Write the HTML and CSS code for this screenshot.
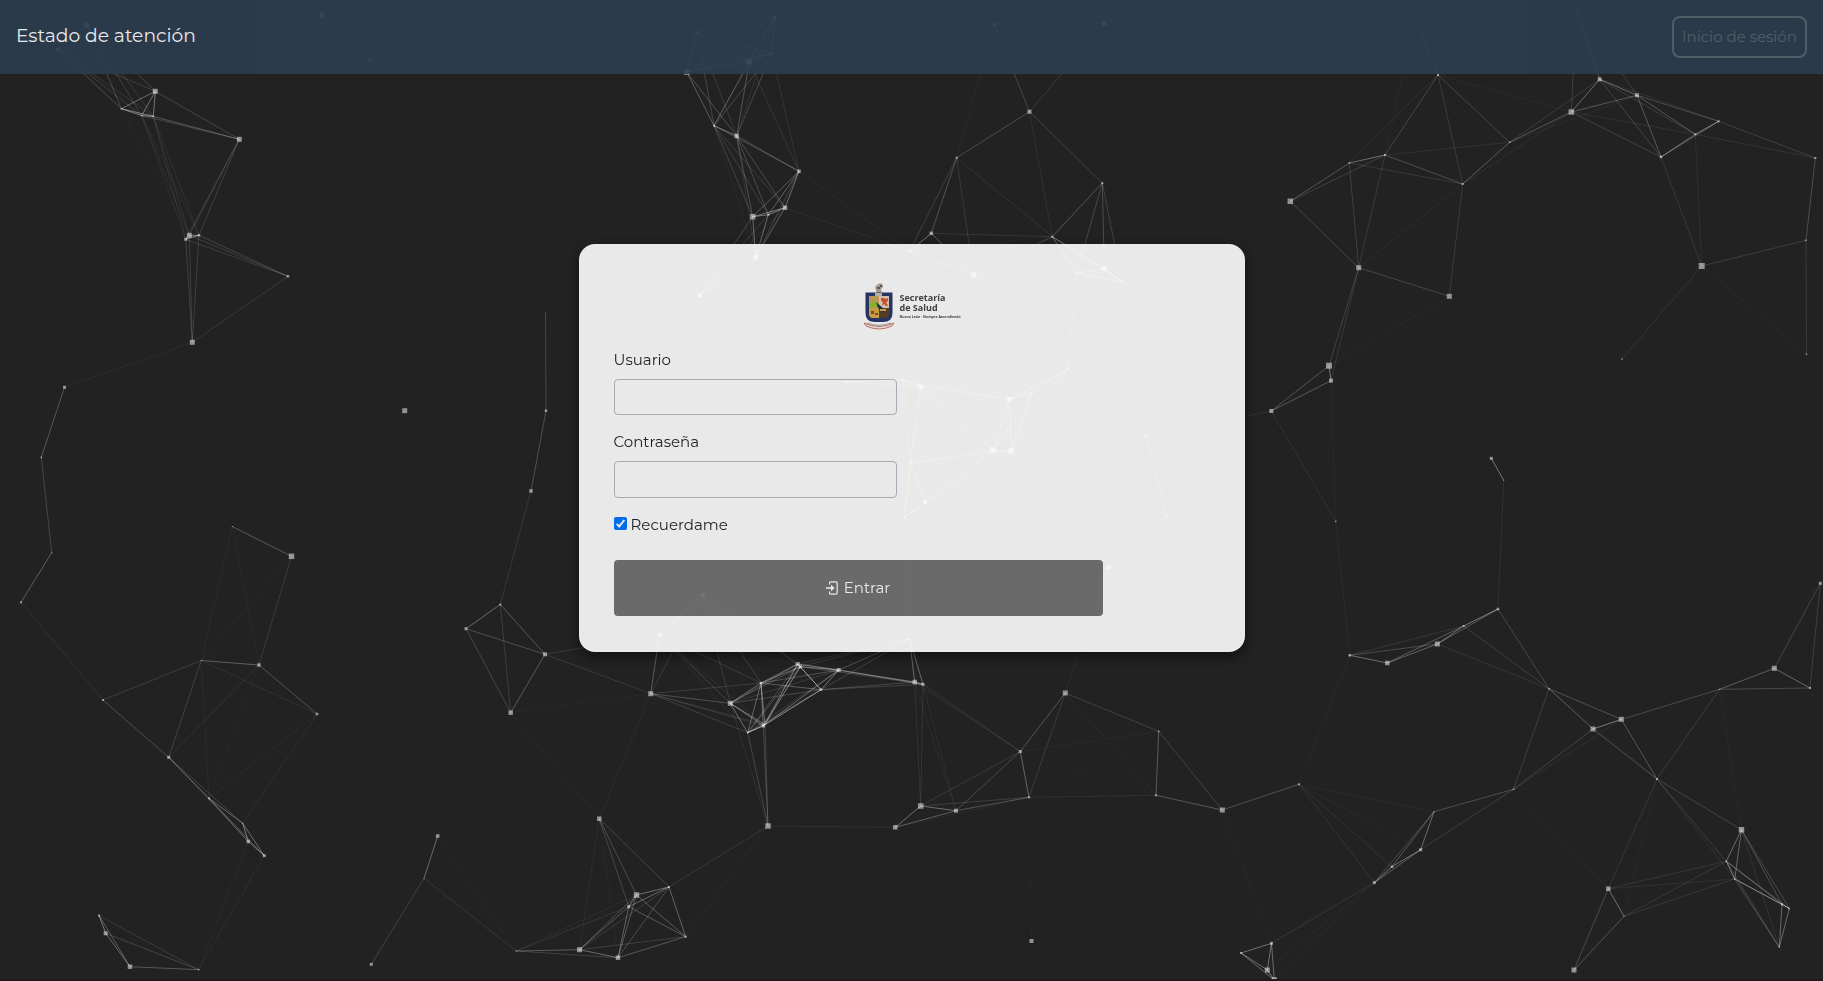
FILE: index.html
```html
<!DOCTYPE html>
<html lang="es">
<head>
<meta charset="utf-8">
<title>Estado de atención</title>
<link rel="stylesheet" href="styles.css">
</head>
<body>
<canvas class="particles" id="particles"></canvas>
<div class="page">
  <header class="navbar">
    <a class="brand"><span class="t-brand">Estado de atención</span></a>
    <button class="login-link" type="button"><span class="t-login">Inicio de sesión</span></button>
  </header>
  <main class="content">
    <form class="card">
      <div class="logo">
        <svg class="crest" width="32" height="48" viewBox="0 0 32 48">
          <path d="M14 13 L13 8 Q11 5 14 3 Q17 0 19.500 2.500 Q21 5 18 7 L19 13 Z" fill="#b5a79b"/>
          <path d="M14 5h3v2h-3z M17 3h2v2h-2z" fill="#6b5b50"/>
          <path d="M2.500 10.500 H29.500 V31 Q29.500 40 20 40 H12 Q2.500 40 2.500 31 Z" fill="#27376b"/>
          <path d="M6 14 H16 V26 H6 Z" fill="#c9a560"/>
          <path d="M16 14 H26 V26 H16 Z" fill="#e5d3bd"/>
          <path d="M6 26 H16 V36 H10 Q6 36 6 32 Z" fill="#d9a947"/>
          <path d="M16 26 H26 V32 Q26 36 21 36 H16 Z" fill="#594325"/>
          <path d="M6 25 Q7 18 13 20 L17 25 Z" fill="#8fc52e"/>
          <path d="M13 20 L21 27 V31 L15 26 Z" fill="#24343b"/>
          <path d="M18 16h3l2 1 2-1v3l-2 1 2 4h-2l-2-2-2 2 1-4-2-1z" fill="#e0532f"/>
          <path d="M17 27h6v2h-6z" fill="#d4a85a"/>
          <path d="M8 29h3v3H8z M12 31h3v2h-3z" fill="#7d5525"/>
          <path d="M12 11h7v3h-7z" fill="#c9beb4"/>
          <path d="M1 41 Q16 48 31 41 L29 44 Q16 50 3 44 Z" fill="#f1efed" stroke="#d3695f" stroke-width=".9"/>
          <path d="M4 41 Q16 45.500 28 41" fill="none" stroke="#7c9b84" stroke-width=".8"/>
        </svg>
        <div class="logo-text">
          <span class="t-l1">Secretaría</span>
          <span class="t-l2">de Salud</span>
          <span class="t-l3">Nuevo León · Siempre Ascendiendo</span>
        </div>
      </div>
      <label class="label" for="user"><span class="t-user">Usuario</span></label>
      <input class="field" id="user" type="text">
      <label class="label" for="pass"><span class="t-pass">Contraseña</span></label>
      <input class="field field-pass" id="pass" type="password">
      <label class="remember">
        <svg width="13" height="13" viewBox="0 0 13 13"><rect width="13" height="13" rx="2" fill="#0075ff"/><path d="M2.700 6.900 L5.200 9.400 L10.300 3" fill="none" stroke="#fff" stroke-width="2"/></svg>
        <span class="t-rem">Recuerdame</span>
      </label>
      <button class="submit" type="button">
        <svg width="12" height="14" viewBox="0 0 12 14"><path d="M3.600 3.400 V2 Q3.600 .9 4.700 .9 H10.100 Q11.200 .9 11.200 2 V12 Q11.200 13.100 10.100 13.100 H4.700 Q3.600 13.100 3.600 12 V10.600" fill="none" stroke="#fff" stroke-width="1.200"/><path d="M0 6.200 H5 V3.700 L8.600 7 L5 10.300 V7.800 H0 Z" fill="#fff"/></svg>
        <span class="t-enter">Entrar</span>
      </button>
    </form>
  </main>
</div>
<script src="particles.js"></script>
</body>
</html>
```
FILE: styles.css
```css
* { box-sizing: border-box; }
body {
  margin: 0;
  background: #222;
  font-family: Montserrat, Inter, sans-serif;
  font-size: 15px;
  font-weight: 450;
  line-height: 24px;
  color: #212529;
  overflow: hidden;
}
.particles { position: fixed; inset: 0; width: 100vw; height: 100vh; }
.page { position: relative; height: 100vh; display: flex; flex-direction: column; border-bottom: 2px solid #22191d; }
.navbar {
  height: 74px;
  padding: 0 16px;
  display: flex;
  align-items: center;
  justify-content: space-between;
  background: #2c3e50;
  opacity: .9;
}
.brand { color: #fff; font-size: 18.700px; line-height: 30px; padding-bottom: 2px; }
.login-link {
  width: 135px;
  height: 42px;
  padding: 0;
  border: 2px solid #566573;
  border-radius: 8px;
  background: transparent;
  color: #566573;
  font: inherit;
  white-space: nowrap;
}
.content { padding-top: 170px; display: flex; justify-content: center; }
.card {
  width: 666px;
  height: 408px;
  padding: 36px 35px;
  border-radius: 16px;
  background: #fff;
  opacity: .9;
  box-shadow: 0 4px 12px rgba(0, 0, 0, .6);
  display: flex;
  flex-direction: column;
  align-items: flex-start;
}
.logo { align-self: center; display: flex; gap: 5px; height: 51px; padding-top: 2px; }
.logo-text { display: flex; flex-direction: column; padding-top: 11px; width: 61px; white-space: nowrap; font-family: "Open Sans", sans-serif; font-weight: 700; color: #444; }
.t-l1, .t-l2 { font-size: 9px; line-height: 10px; }
.t-l3 { font-size: 3.500px; line-height: 7px; }
.label { margin: 17px 0 7px; }
.field { width: 283px; height: 36px; border: 1px solid #b4bac6; border-radius: 4px; background: transparent; }
.field + .label { margin-top: 15px; }
.field-pass { height: 37px; }
.remember { display: flex; align-items: center; gap: 4px; margin-top: 15px; }
.remember svg { margin-bottom: 4px; }
.submit {
  display: flex;
  align-items: center;
  justify-content: center;
  gap: 6px;
  width: 489px;
  height: 56px;
  margin-top: 23px;
  border: 0;
  border-radius: 4px;
  background: #737373;
  color: #fff;
  font: inherit;
}
```
FILE: particles.js
```js
// Each particle is [x, y, side length].
const points = [
[87,25.3,5],[57.5,49.3,3],[322,15,5],[370,60.5,3],[155.3,91.3,5],[121.3,108.7,1.5],[141.7,115.7,1],[153.3,116.3,1.5],[239.3,139.3,5],[189.3,235.3,5],[185.7,239.3,3],[199,235.3,2.5],[288,276.3,2.5],[192.3,342.3,5],[64.5,387.3,3],[41.3,457.3,1.5],[404.7,410.7,5],
[697,32.3,2],[775.3,16.7,2],[771.7,53,1.5],[749.3,61.7,5.5],[686.7,72,5.5],[714,125.7,2],[736.7,136,4.5],[799,171.3,3.5],[785,207.7,4.5],[752.7,216.7,5.5],[768.3,214.7,2],[755.7,257.3,4.5],[699.7,295.3,4.5],[545.5,312.3,.5],[546,410.7,2.5],[531,491,3.5],[909.7,251,2],[845.7,382,2],[902.7,379.7,1.5],[920.7,386.5,5],[910.3,463,2],
[994.3,24.3,3],[1104.3,23.7,5],[1029.5,111.7,4],[956.7,157.7,2],[1102.3,183,2],[931.3,233.3,3.5],[1052.3,236.7,2],[973.5,274.7,5],[1104.3,268.7,5],[1076.7,273.3,1.5],[1122,281.3,1.5],[1067.7,369,1.5],[1009.5,399.3,5],[1032,393,1.5],[993,450,5.5],[1011.5,451,5.5],[1146.3,436.7,2],[1290.3,201.3,5.5],[1349.3,163,1.5],[1358.7,267.7,5],[1329,365.7,6],[1331,380.7,4],[1271.3,411,4],
[1415,18,.5],[1576.3,7.3,1],[1438,75,2],[1599.7,79.3,4],[1571.3,112,5.5],[1637,95.3,4],[1509.7,142.3,1.5],[1385,155,2],[1462.7,184,2],[1718.7,121.3,2],[1695.3,134.3,2],[1661,157,2.5],[1815.3,158,2],[1806,240.3,1.5],[1701.7,266,6],[1622,359,1.5],[1806.5,354.3,1.5],[1449.3,296.3,5],[1491.3,458.3,3],[1503.7,480.3,1],
[51.7,552.7,1],[21,602.3,2],[103,700,2],[232.3,526.5,1],[291.5,556.3,5.5],[201.3,660.5,1],[259,665,3.5],[317,714,2.5],[168.7,757.3,3],[209,798.3,2],[242.7,823.3,1],[248.3,841.5,3.5],[264.3,855.7,3],[99,915.5,2],[105.7,933.3,4],[130,966.7,4.5],[198.7,969.7,1.5],[437.7,836,3.5],[424,878.3,1],[371.3,964.3,3],
[500.3,604.5,2],[466,628.7,3],[545,654.3,4],[510.7,712.7,4.5],[702.7,595,4],[659.5,634.7,4],[650.7,693.7,5],[761,683,2.5],[730.3,703.3,5],[797.7,664,4],[800.3,666.7,3.5],[838.7,670,4],[821,689.7,2.5],[747.7,732.7,1.5],[763.3,725.8,3.5],[765,724.7,1],[599.3,818.7,4.5],[768,826,5.5],[895.3,827.3,4.5],[636.5,895,5.5],[628.7,906.7,3],[669,887,2],[685.7,936.7,2],[579.5,949.7,5],[618,957.7,4.5],[516,951,1],[909.5,639,1.5],[914.7,682,4.5],[923,684.3,3],
[925.3,502,3.5],[904.3,518,2],[1166.7,516,1.5],[1108.7,567,4],[1065.3,693,5],[1020.3,751.5,3],[1029,797.3,2],[920.7,806,5.5],[956,810.7,4],[1158.7,731.3,1.5],[1156,795.3,2],[1222.3,810,5],[1299,784.3,2],[1349.7,655.3,2.5],[1335.7,521.3,1.5],[1031.5,941,4],[1271.5,943.3,3],[1241,953,2],[1267.3,970,5],[1274.3,980,5.5],
[1498,609,2.5],[1463.7,626,2],[1437.3,644,5],[1387.3,663,4.5],[1549,688.7,1.5],[1593,729,5],[1621.3,719.3,5],[1719.5,689.3,1],[1774.3,668.3,5],[1810,688,2],[1820.3,583.3,3],[1657,779,2],[1513.5,789.3,1.5],[1434,811.7,1],[1420.7,849.7,3],[1392,866.7,2.5],[1374.3,882.7,3],[1741.5,829.7,5.5],[1726.3,861.3,1.5],[1734.7,879,1.5],[1608.3,888.7,4.5],[1624,916.3,1],[1782,904.3,2],[1789.3,908.5,1.5],[1779.3,947.3,1],[1574,970,5]
];
const LINK_DISTANCE = 151;
const canvas = document.getElementById("particles");
canvas.width = window.innerWidth;
canvas.height = window.innerHeight;
const ctx = canvas.getContext("2d");
points.forEach(([x, y, s], i) => {
  ctx.fillStyle = "rgba(255,255,255,.5)";
  ctx.fillRect(x - s / 2, y - s / 2, s, s);
  for (let j = i + 1; j < points.length; j++) {
    const [x2, y2] = points[j];
    const d = Math.hypot(x - x2, y - y2);
    if (d >= LINK_DISTANCE) continue;
    ctx.strokeStyle = `rgba(255,255,255,${0.45 * (1 - d / LINK_DISTANCE)})`;
    ctx.beginPath();
    ctx.moveTo(x, y);
    ctx.lineTo(x2, y2);
    ctx.stroke();
  }
});
```
